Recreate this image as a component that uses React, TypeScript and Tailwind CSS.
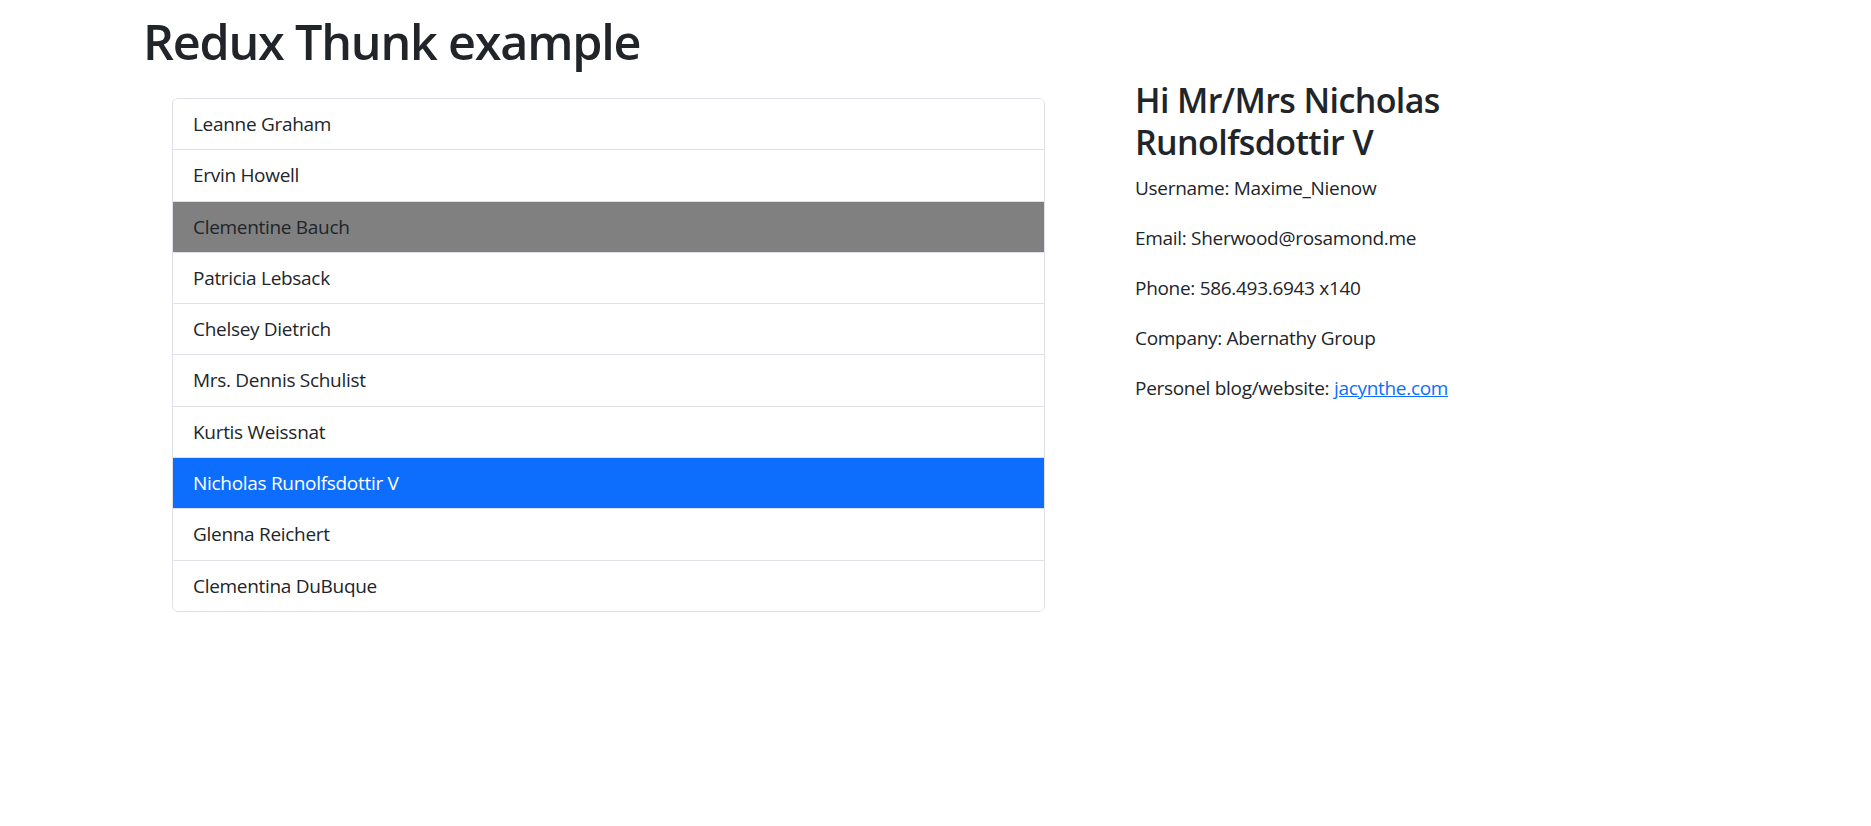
import React from "react";

const users = [
  "Leanne Graham",
  "Ervin Howell",
  "Clementine Bauch",
  "Patricia Lebsack",
  "Chelsey Dietrich",
  "Mrs. Dennis Schulist",
  "Kurtis Weissnat",
  "Nicholas Runolfsdottir V",
  "Glenna Reichert",
  "Clementina DuBuque",
];

export default function App() {
  return (
    <div
      className="min-h-[826px] w-full bg-white text-[#212529]"
      style={{ fontFamily: '"Open Sans", "Noto Sans", sans-serif' }}
    >
      <div className="pl-[143px] pt-[11px]">
        <h1 className="m-0 text-[48.5px] font-semibold leading-[60px] tracking-[-1.2px]">
          Redux Thunk example
        </h1>
        <div className="mt-[27px] flex items-start">
          <ul className="ml-[29px] w-[873px] overflow-hidden rounded-[6px] border border-[#dee2e6]">
            {users.map((u, i) => {
              const cls =
                i === 2
                  ? "bg-[#808080] text-[#212529]"
                  : i === 7
                  ? "bg-[#0d6efd] text-white"
                  : "bg-white text-[#212529]";
              return (
                <li
                  key={u}
                  className={`${cls} ${i > 0 ? "border-t border-[#dee2e6]" : ""} px-[20px] py-[10px] text-[19px] leading-[30.3px] tracking-[-0.3px]`}
                >
                  {u}
                </li>
              );
            })}
          </ul>
          <div className="ml-[90px] mt-[-19px] w-[400px]">
            <h3 className="m-0 mb-[10px] text-[34px] font-semibold leading-[42px] tracking-[-0.6px]">
              Hi Mr/Mrs Nicholas Runolfsdottir V
            </h3>
            <div className="text-[19px] leading-[30px] tracking-[-0.3px]">
              <p className="mb-[20px]">Username: Maxime_Nienow</p>
              <p className="mb-[20px]">Email: Sherwood@rosamond.me</p>
              <p className="mb-[20px]">Phone: 586.493.6943 x140</p>
              <p className="mb-[20px]">Company: Abernathy Group</p>
              <p className="mb-[20px]">
                Personel blog/website:{" "}
                <a href="#" className="text-[#0d6efd] underline">
                  jacynthe.com
                </a>
              </p>
            </div>
          </div>
        </div>
      </div>
    </div>
  );
}
